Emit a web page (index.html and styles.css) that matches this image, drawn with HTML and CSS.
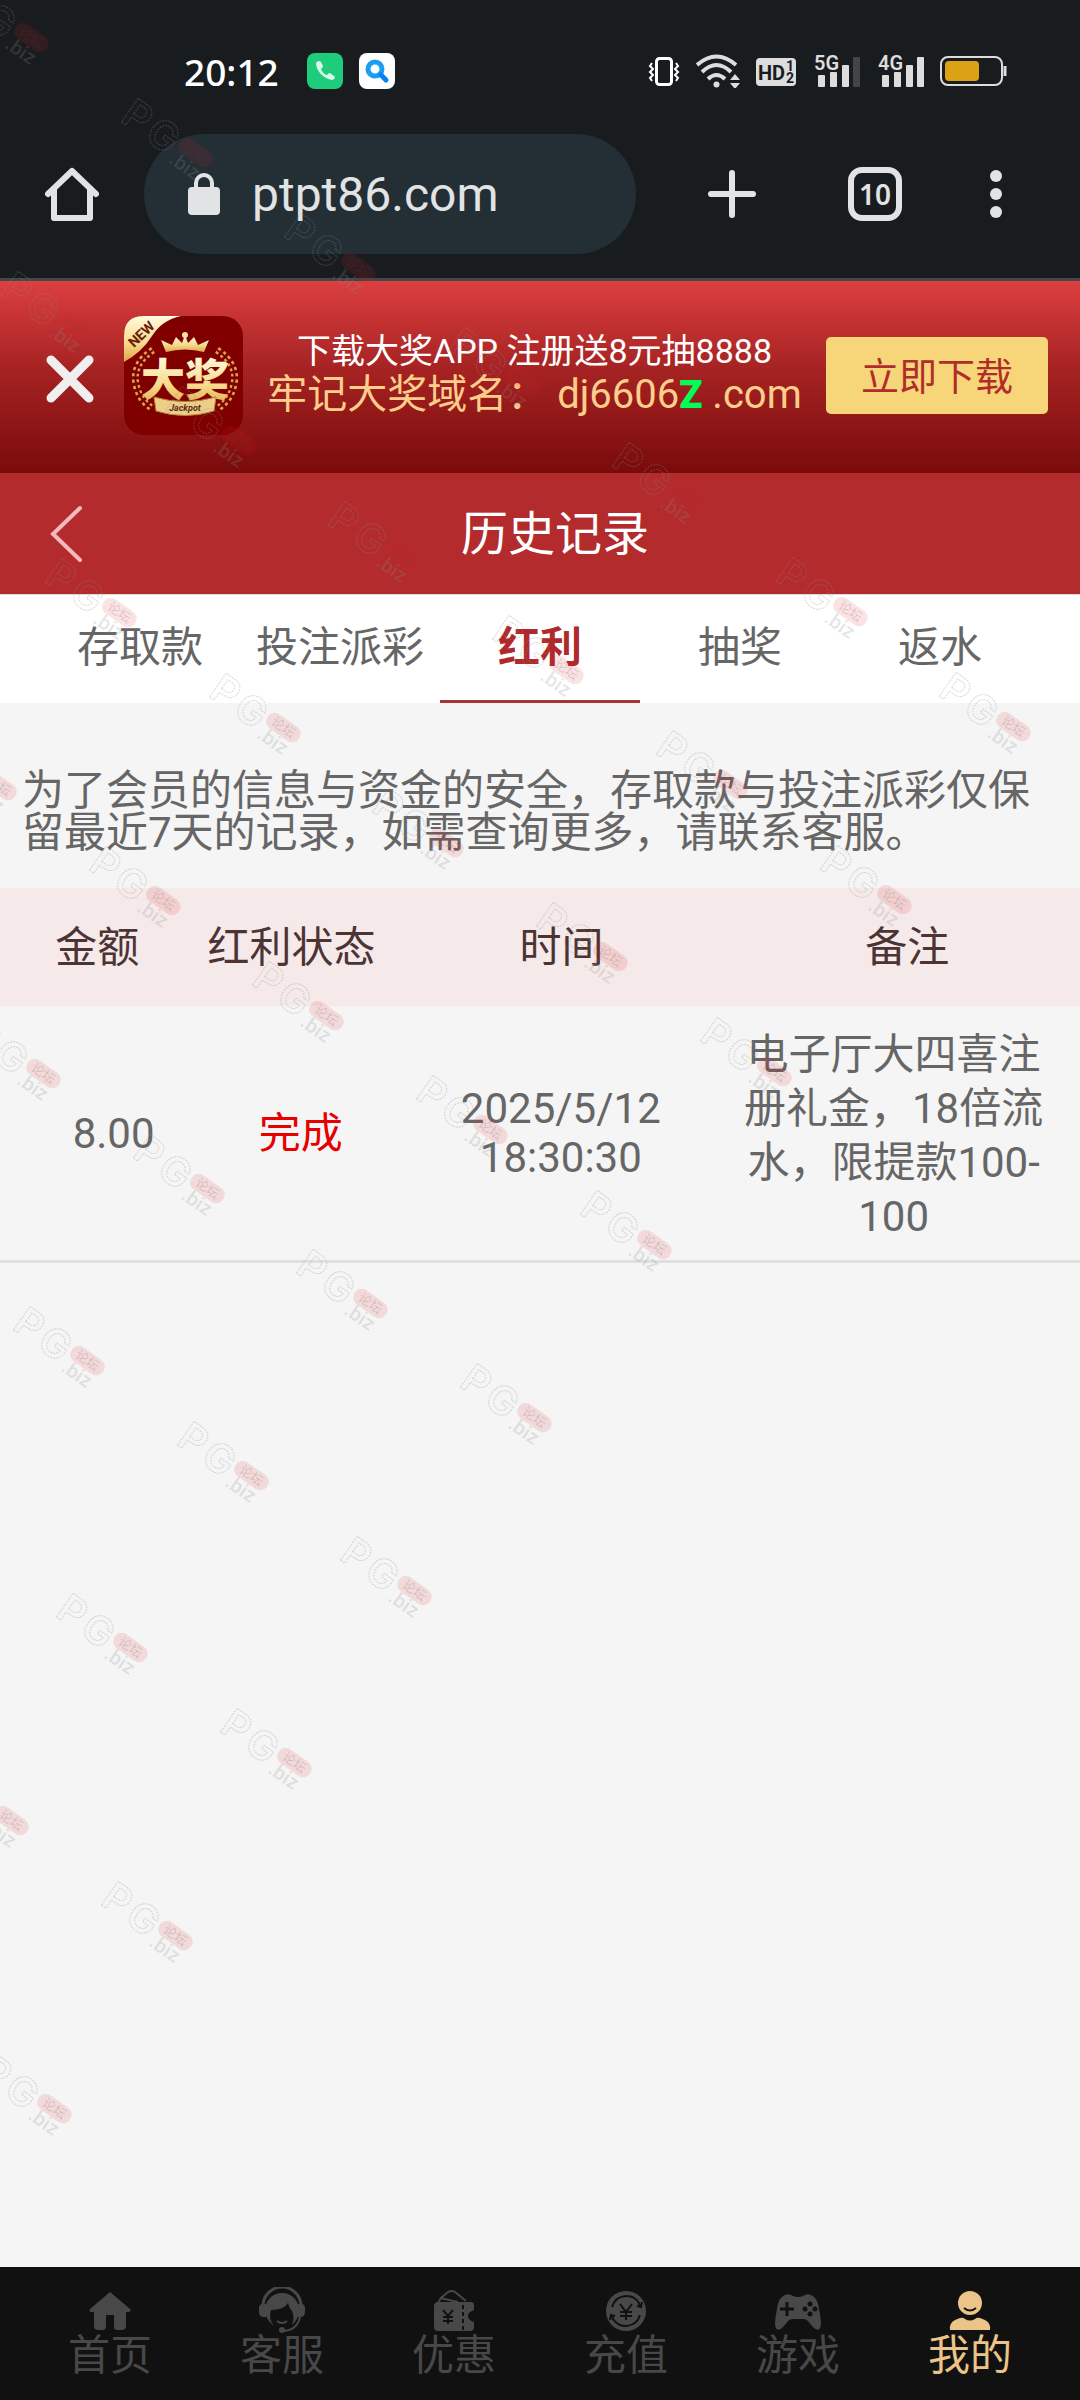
FILE: index.html
```
<!DOCTYPE html>
<html lang="zh-CN">
<head>
  <meta charset="UTF-8">
  <meta name="viewport" content="width=device-width, initial-scale=1.0">
  <title>历史记录</title>
  <link rel="stylesheet" href="styles.css">
</head>
<body>

  <!-- Phone status bar -->
  <div class="status-bar">
    <span class="clock">20:12</span>
    <svg class="app-icon" width="36" height="36" viewBox="0 0 36 36">
      <rect width="36" height="36" rx="8" fill="#1ecd7c"/>
      <path d="M9 10c1-2 4-3 5-1l2 4c0 2-2 2-2 3 1 3 3 4 5 6 2 0 2-2 4-2l4 3c2 1 0 4-2 4C17 26 9 18 9 10z" fill="#d5fbe8"/>
    </svg>
    <svg class="app-icon" width="36" height="36" viewBox="0 0 36 36">
      <rect width="36" height="36" rx="8" fill="#fff"/>
      <circle cx="16" cy="16" r="7" fill="none" stroke="#1b9df2" stroke-width="5"/>
      <path d="M22 22l5 5" stroke="#0b80f0" stroke-width="5" stroke-linecap="round"/>
    </svg>
    <div class="status-icons">
      <svg width="32" height="34" viewBox="0 0 32 34" fill="none" stroke="#fff">
        <rect x="8.500" y="4.500" width="15" height="26" rx="3" stroke-width="3"/>
        <path d="M4 9l-2 3 3 3-3 3 3 3-3 3 2 3M28 9l2 3-3 3 3 3-3 3 3 3-2 3" stroke-width="2"/>
      </svg>
      <svg width="44" height="34" viewBox="0 0 44 34" fill="none" stroke="#ddd" stroke-width="4">
        <path d="M1 11q19.500-17 39 0M6 18q14.500-14 29 0M12 25q8.500-8 17 0"/>
        <circle cx="20.500" cy="30.500" r="3" fill="#ddd" stroke="none"/>
        <path d="M34 26l5-6 5 6zM34 29l5 6 5-6z" fill="#ddd" stroke="none"/>
      </svg>
      <svg width="42" height="34" viewBox="0 0 42 34">
        <rect y="4" width="40" height="28" rx="4" fill="#ddd"/>
        <text class="hd-text" x="2" y="26">HD</text>
        <text class="hd-small" x="30" y="17">1</text>
        <text class="hd-small" x="30" y="29">2</text>
      </svg>
      <svg class="signal" width="48" height="34" viewBox="0 0 48 34" fill="#ddd">
        <text class="net-text" y="16">5G</text>
        <rect x="4" y="21" width="7" height="12" rx="1"/>
        <rect x="16" y="18" width="7" height="15" rx="1"/>
        <rect x="28" y="11" width="7" height="22" rx="1"/>
        <rect x="39" y="3" width="7" height="30" rx="1" fill="#444"/>
      </svg>
      <svg class="signal" width="46" height="34" viewBox="0 0 46 34" fill="#ddd">
        <text class="net-text" y="16">4G</text>
        <rect x="4" y="21" width="7" height="12" rx="1"/>
        <rect x="16" y="18" width="7" height="15" rx="1"/>
        <rect x="28" y="11" width="7" height="22" rx="1"/>
        <rect x="39" y="3" width="7" height="30" rx="1"/>
      </svg>
      <svg width="67" height="34" viewBox="0 0 67 34">
        <rect x="1" y="3" width="61" height="28" rx="7" fill="none" stroke="#ddd" stroke-width="2"/>
        <rect x="5" y="7" width="34" height="20" rx="4" fill="#dca215"/>
        <path d="M65 12v10" stroke="#ddd" stroke-width="3"/>
      </svg>
    </div>
  </div>

  <!-- Browser toolbar -->
  <div class="toolbar">
    <button class="icon-btn" aria-label="Home">
      <svg width="54" height="54" viewBox="0 0 54 54" fill="none" stroke="#e1e3e5" stroke-width="6" stroke-linecap="round" stroke-linejoin="round">
        <path d="M3 27L27 4l24 23M9 23v28h36V23"/>
      </svg>
    </button>
    <label class="url-box">
      <svg width="32" height="44" viewBox="0 0 32 44">
        <rect y="15" width="32" height="28" rx="4" fill="#e1e3e5"/>
        <path d="M8 17V11a8 8 0 0 1 16 0v6" fill="none" stroke="#e1e3e5" stroke-width="4"/>
      </svg>
      <input class="url-input" type="text" value="ptpt86.com" aria-label="Address">
    </label>
    <div class="toolbar-actions">
      <button class="icon-btn" aria-label="New tab">
        <svg width="60" height="54" viewBox="0 0 60 54" stroke="#e1e3e5" stroke-width="6" stroke-linecap="round">
          <path d="M30 6v42M9 27h42"/>
        </svg>
      </button>
      <button class="tab-count">10</button>
      <button class="icon-btn" aria-label="Menu">
        <svg width="16" height="54" viewBox="0 0 16 54" fill="#e1e3e5">
          <circle cx="8" cy="9" r="6"/><circle cx="8" cy="27" r="6"/><circle cx="8" cy="45" r="6"/>
        </svg>
      </button>
    </div>
  </div>

  <!-- App download banner -->
  <div class="banner">
    <button class="icon-btn close-btn" aria-label="关闭">
      <svg width="48" height="48" viewBox="0 0 48 48" stroke="#efefef" stroke-width="9" stroke-linecap="round">
        <path d="M5 5l38 38M43 5L5 43"/>
      </svg>
    </button>
    <svg class="logo" width="119" height="119" viewBox="0 0 119 119">
      <defs>
        <linearGradient id="gold" x1="0" y1="0" x2="0" y2="1">
          <stop offset="0" stop-color="#fffbe0"/>
          <stop offset="0.600" stop-color="#f7d98a"/>
          <stop offset="1" stop-color="#dda548"/>
        </linearGradient>
      </defs>
      <rect width="119" height="119" rx="20" fill="#800000"/>
      <path d="M20 0h37Q38 4 28 20T0 46V20Q0 0 20 0z" fill="url(#gold)"/>
      <text class="logo-new" transform="translate(10 32) rotate(-44)">NEW</text>
      <path d="M42 36l-5-12 11 5 4-8 6 6 3-8 3 8 6-6 4 8 11-5-5 12q-19-5-38 0z" fill="url(#gold)"/>
      <circle cx="61" cy="19" r="3" fill="#f7e2a0"/>
      <path d="M29 34Q8 48 12 68q3 16 17 25M93 34q21 14 17 34-3 16-17 25" fill="none" stroke="#d9a452" stroke-width="7" stroke-dasharray="3 3"/>
      <path d="M29 34Q8 48 12 68q3 16 17 25M93 34q21 14 17 34-3 16-17 25" fill="none" stroke="#800000" stroke-width="2"/>
      <text class="logo-text" x="61" y="80" fill="url(#gold)">大奖</text>
      <path d="M30 81q31 9 62 0l-2 14q-29 9-58 0z" fill="#edce88" stroke="#b98237"/>
      <text class="logo-sub" x="61" y="95">Jackpot</text>
    </svg>
    <div class="banner-text">
      <p class="banner-line">下载大奖APP 注册送8元抽8888</p>
      <p class="banner-domain">牢记大奖域名： dj6606<b>Z</b> .com</p>
    </div>
    <button class="download-btn">立即下载</button>
  </div>

  <!-- Page title -->
  <header class="title-bar">
    <button class="icon-btn" aria-label="返回">
      <svg width="32" height="58" viewBox="0 0 32 58" fill="none" stroke="#f3b9bd" stroke-width="4" stroke-linecap="round">
        <path d="M30 3L3 29l27 26"/>
      </svg>
    </button>
    <h1>历史记录</h1>
  </header>

  <nav class="tabs">
    <a href="#">存取款</a>
    <a href="#">投注派彩</a>
    <a href="#" class="active">红利</a>
    <a href="#">抽奖</a>
    <a href="#">返水</a>
  </nav>

  <main>
    <p class="notice">为了会员的信息与资金的安全，存取款与投注派彩仅保留最近7天的记录，如需查询更多，请联系客服。</p>

    <table class="records">
      <thead>
        <tr><th>金额</th><th>红利状态</th><th>时间</th><th>备注</th></tr>
      </thead>
      <tbody>
        <tr>
          <td>8.00</td>
          <td class="done">完成</td>
          <td>2025/5/12<br>18:30:30</td>
          <td class="remark">电子厅大四喜注册礼金，18倍流水，限提款100-100</td>
        </tr>
      </tbody>
    </table>
  </main>

  <!-- Bottom navigation -->
  <nav class="bottom-nav">
    <a href="#">
      <svg width="46" height="46" viewBox="0 0 46 46" fill="currentColor">
        <path d="M23 5l20 17q2 3-2 3h-2v14q0 4-4 4h-5q-3 0-3-4V28h-8v11q0 4-3 4h-5q-4 0-4-4V25H5q-4 0-2-3z"/>
      </svg>
      首页
    </a>
    <a href="#">
      <svg width="46" height="46" viewBox="0 0 46 46" fill="none" stroke="currentColor">
        <path d="M4 19a19 19 0 0 1 38 0" stroke-width="3"/>
        <path d="M7 17v13q-7 1-7-5v-4q0-5 7-4zM39 17v13q7 1 7-5v-4q0-5-7-4z" fill="currentColor" stroke="none"/>
        <path d="M6 23a17 17 0 0 1 34 0q0 9-7 15 3-8 0-14-3-3-4-8-4 7-17 7-3 9 3 16-9-7-9-16z" fill="currentColor" stroke="none"/>
        <path d="M18 34q5 4 10 0M41 30q-3 14-18 14" stroke-width="2"/>
        <circle cx="23" cy="43" r="3" fill="currentColor" stroke="none"/>
      </svg>
      客服
    </a>
    <a href="#">
      <svg width="46" height="46" viewBox="0 0 46 46">
        <path d="M7 16l3-5 7-6q4-2 7 0l11 9M9 11l18 4" fill="none" stroke="currentColor" stroke-width="2"/>
        <path d="M7 15h33q3 0 3 3v5q-6 2-6 6t6 6v5q0 4-4 4H7q-4 0-4-4V19q0-4 4-4z" fill="currentColor"/>
        <path d="M12 23l5 6 5-6M17 29v8M12 30h10M12 34h10" fill="none" stroke="#111" stroke-width="2"/>
        <path d="M32 18v25" stroke="#111" stroke-width="2" stroke-dasharray="4 3"/>
      </svg>
      优惠
    </a>
    <a href="#">
      <svg width="46" height="46" viewBox="0 0 46 46" fill="none" stroke="#111">
        <circle cx="23" cy="24" r="20" fill="currentColor" stroke="none"/>
        <path d="M9 20a15 15 0 0 1 27-4l1 4M37 28a15 15 0 0 1-27 4l-1-4M34 19l4 1 1-5M12 29l-4-1-1 5" stroke-width="2"/>
        <path d="M17 17l6 8 6-8M23 25v8M17 25h12M17 29h12" stroke-width="2"/>
      </svg>
      充值
    </a>
    <a href="#">
      <svg width="50" height="46" viewBox="0 0 50 46">
        <path d="M12 8q4-2 8 1 5 2 10 0 4-3 8-1 7 3 8 14 2 10 2 15-1 9-7 4-3-3-6-7-2-2-5-2H20q-3 0-5 2-3 4-6 7-6 5-7-4 0-5 2-15 1-11 8-14z" fill="currentColor"/>
        <path d="M14 15v14M7 22h14" stroke="#111" stroke-width="3"/>
        <g fill="#111"><circle cx="37" cy="17" r="2.500"/><circle cx="37" cy="27" r="2.500"/><circle cx="32" cy="22" r="2.500"/><circle cx="42" cy="22" r="2.500"/></g>
      </svg>
      游戏
    </a>
    <a href="#" class="active">
      <svg width="46" height="46" viewBox="0 0 46 46">
        <circle cx="23" cy="16" r="12" fill="currentColor"/>
        <path d="M17 21q6 5 12 0" fill="none" stroke="#111" stroke-width="2"/>
        <path d="M3 43q-1-7 5-10l5-2q3-1 5 1 5 3 10 0 2-2 5-1l5 2q6 3 5 10z" fill="currentColor"/>
      </svg>
      我的
    </a>
  </nav>

  <!-- Watermark layer, filled in below -->
  <svg class="watermark" aria-hidden="true">
    <defs>
      <g id="mark">
        <g transform="rotate(35)">
          <text class="mark-big" x="-5" y="-2">P</text>
          <text class="mark-big" x="25" y="-1">G</text>
          <rect x="57" y="-28" width="38" height="17" rx="8" class="mark-pill"/>
          <text class="mark-cn" x="76" y="-15">论坛</text>
          <text class="mark-biz" x="59" y="4">.biz</text>
        </g>
      </g>
    </defs>
  </svg>

  <script>
    // each row: x and y of the first mark, number of marks
    const rows = [
      [-42, 10, 7], [2, 298, 6], [46, 585, 5], [-74, 758, 5], [-30, 1046, 4],
      [14, 1333, 3], [57, 1620, 2], [-62, 1793, 2], [-19, 2081, 1]
    ];
    const layer = document.querySelector(".watermark");
    rows.forEach(([x, y, count]) => {
      for (let i = 0; i < count; i++) {
        const use = document.createElementNS("http://www.w3.org/2000/svg", "use");
        use.setAttribute("href", "#mark");
        use.setAttribute("x", Math.round(x + i * 163.7));
        use.setAttribute("y", Math.round(y + i * 114.8));
        layer.appendChild(use);
      }
    });
  </script>
</body>
</html>
```
FILE: styles.css
```
* { box-sizing: border-box; }
body {
  position: relative;
  display: flex;
  flex-direction: column;
  min-height: 100vh;
  margin: 0;
  font-family: Roboto, "Noto Sans CJK SC", sans-serif;
  font-size: 42px;
  color: #666;
  background-color: #f5f5f5;
}
h1, p { margin: 0; }
a {
  color: inherit;
  text-decoration: none;
}
button {
  padding: 0;
  border: none;
  font-family: inherit;
  background: none;
}
svg {
  display: block;
  flex-shrink: 0;
}

/* status bar */
.status-bar {
  display: flex;
  align-items: center;
  height: 134px;
  padding: 8px 73px 0 184px;
  background-color: #191c1f;
}
.clock {
  margin-right: 12px;
  font-family: "Noto Sans", sans-serif;
  font-size: 37px;
  font-weight: 500;
  color: #fff;
}
.app-icon { margin-left: 16px; }
.status-icons {
  display: flex;
  gap: 16px;
  margin-left: auto;
}
.signal { overflow: visible; }
.hd-text {
  font-size: 20px;
  font-weight: 700;
  fill: #191c1f;
}
.hd-small {
  font-size: 14px;
  font-weight: 700;
  fill: #191c1f;
}
.net-text {
  font-size: 20px;
  font-weight: 600;
}

/* toolbar */
.toolbar {
  display: flex;
  align-items: center;
  padding: 0 76px 24px 45px;
  border-bottom: 3px solid #45454a;
  background-color: #191c1f;
}
.url-box {
  display: flex;
  flex: 1;
  align-items: center;
  gap: 32px;
  min-width: 0;
  height: 120px;
  margin-left: 45px;
  padding: 0 44px;
  border-radius: 60px;
  background-color: #232f35;
}
.url-input {
  flex: 1;
  min-width: 0;
  padding: 0;
  border: none;
  outline: none;
  font-family: inherit;
  font-size: 48px;
  color: #e1e3e5;
  background: none;
}
.toolbar-actions {
  display: flex;
  align-items: center;
  gap: 86px;
  margin-left: 66px;
}
.tab-count {
  width: 54px;
  height: 54px;
  border: 6px solid #e1e3e5;
  border-radius: 14px;
  font-family: "Noto Sans", sans-serif;
  font-size: 28px;
  font-weight: 600;
  line-height: 40px;
  color: #e1e3e5;
}

/* banner */
.banner {
  display: flex;
  align-items: center;
  height: 192px;
  padding: 0 32px 4px 46px;
  background: linear-gradient(#dc3f40, #a72323 45%, #7a0b0b);
}
.close-btn { padding-top: 8px; }
.logo { margin-left: 30px; }
.banner-text {
  flex: 1;
  padding-bottom: 4px;
  text-align: center;
  white-space: nowrap;
}
.banner-line {
  font-size: 34px;
  line-height: 44px;
  color: #fff;
}
.banner-domain {
  font-size: 40px;
  line-height: 44px;
  color: #fdce8b;
}
.banner-domain b {
  font-size: 38px;
  font-weight: 900;
  color: #00ff56;
}
.download-btn {
  width: 222px;
  height: 77px;
  padding-bottom: 4px;
  border-radius: 5px;
  font-size: 38px;
  color: #b22c2c;
  background-color: #f6d679;
}

/* title */
.title-bar {
  display: grid;
  grid-template-columns: 1fr auto 1fr;
  align-items: center;
  height: 121px;
  padding: 0 20px 0 50px;
  background-color: #b32b2c;
}
.title-bar .icon-btn { justify-self: start; }
.title-bar h1 {
  padding-bottom: 8px;
  font-size: 47px;
  font-weight: 400;
  color: #fff;
}

/* tabs */
.tabs {
  display: flex;
  padding: 0 40px;
  border-top: 1px solid #ddd;
  background-color: #fff;
}
.tabs a {
  flex: 1;
  height: 108px;
  border-bottom: 3px solid transparent;
  line-height: 106px;
  text-align: center;
  white-space: nowrap;
}
.tabs .active {
  border-bottom-color: #a93236;
  font-weight: 600;
  color: #b02a2c;
}

/* records */
main { flex: 1; }
.notice {
  padding: 67px 22px 34px;
  line-height: 42px;
}
.records {
  display: block;
  text-align: center;
}
.records thead, .records tbody { display: block; }
.records tr {
  display: grid;
  grid-template-columns: 18fr 18fr 32fr 32fr;
  align-items: center;
}
.records th, .records td {
  padding: 0;
  font-weight: 400;
  line-height: 49px;
}
.records thead tr {
  height: 118px;
  color: #4d3434;
  background-color: #f5eae9;
}
.records tbody tr {
  min-height: 257px;
  padding: 0 20px;
  border-bottom: 3px solid #e0e0e0;
}
.records .done { color: #e60000; }
.records .remark {
  padding: 6px 10px 0;
  line-height: 54px;
}

/* bottom nav */
.bottom-nav {
  display: flex;
  height: 133px;
  padding: 20px 24px 0;
  line-height: 46px;
  color: #484848;
  background-color: #111;
}
.bottom-nav a {
  display: flex;
  flex: 1;
  flex-direction: column;
  align-items: center;
}
.bottom-nav .active { color: #ecc488; }

/* logo */
.logo-text {
  font-size: 44px;
  font-weight: 900;
  text-anchor: middle;
}
.logo-new {
  font-size: 14px;
  font-weight: 700;
  fill: #6b1a0c;
}
.logo-sub {
  font-size: 9px;
  font-weight: 700;
  font-style: italic;
  text-anchor: middle;
  fill: #5c2a10;
}

/* watermark */
.watermark {
  position: absolute;
  inset: 0;
  width: 100%;
  height: 100%;
  overflow: hidden;
  pointer-events: none;
}
.mark-big {
  font-family: Inter, sans-serif;
  font-size: 40px;
  font-weight: 600;
  fill: none;
  stroke: rgba(140, 140, 140, 0.35);
  stroke-dasharray: 2 1;
}
.mark-pill { fill: rgba(225, 30, 40, 0.13); }
.mark-cn {
  font-size: 13px;
  text-anchor: middle;
  fill: rgba(90, 70, 70, 0.2);
}
.mark-biz {
  font-size: 20px;
  font-weight: 500;
  fill: rgba(140, 140, 140, 0.22);
}
```
